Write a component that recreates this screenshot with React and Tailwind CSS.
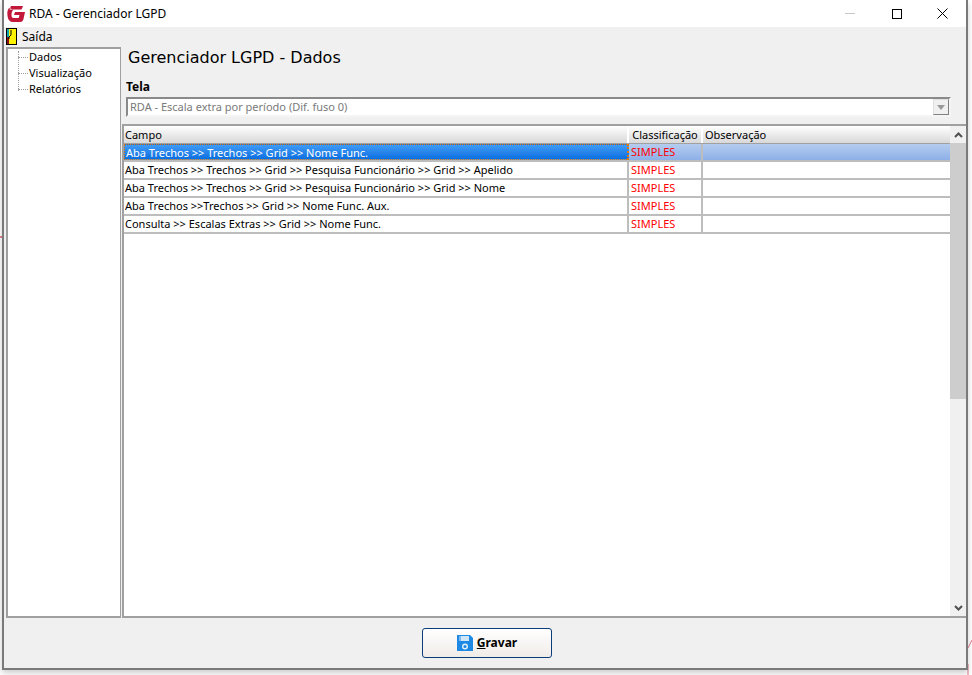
const rows = [
  'Aba Trechos >> Trechos >> Grid >> Nome Func.',
  'Aba Trechos >> Trechos >> Grid >> Pesquisa Funcionário >> Grid >> Apelido',
  'Aba Trechos >> Trechos >> Grid >> Pesquisa Funcionário >> Grid >> Nome',
  'Aba Trechos >>Trechos >> Grid >> Nome Func. Aux.',
  'Consulta >> Escalas Extras >> Grid >> Nome Func.',
];

const treeItems = ['Dados', 'Visualização', 'Relatórios'];

function AppLogo() {
  return (
    <svg width="18" height="18" viewBox="0 0 18 18">
      <path d="M4 1h12l-1.5 3.5H2.5z M2 3C0.5 5 0 7 0.5 11 1 15 3 17 6 17h7c2 0 3-1 3.5-3L18 7H8L7 10h5.5l-.8 3H6.5C5 13 4.5 12 4.5 10c0-2 .5-4 2-5.5z" fill="#c2183a" />
    </svg>
  );
}

function ExitIcon() {
  return (
    <svg width="11" height="17" viewBox="0 0 11 17">
      <rect x="0" y="0" width="11" height="17" fill="#000" />
      <rect x="1" y="1" width="2" height="8" fill="#0ea5b5" />
      <rect x="1" y="9" width="2" height="7" fill="#8b1010" />
      <rect x="3" y="1" width="7" height="15" fill="#fff200" />
      <path d="M5 2v5l-2 2v2" stroke="#000" fill="none" />
    </svg>
  );
}

function SaveIcon() {
  return (
    <svg width="16" height="16" viewBox="0 0 16 16">
      <path d="M0 0h13l3 3v13H0z" fill="#1e88e5" />
      <rect x="2" y="1" width="10" height="5" fill="#cfe5f8" />
      <rect x="2" y="1" width="2" height="5" fill="#7db9ee" />
      <circle cx="8" cy="11.5" r="2.3" fill="none" stroke="#e3f1fc" strokeWidth="1.4" />
    </svg>
  );
}

export default function App() {
  return (
    <div className="relative h-[675px] w-[972px] overflow-hidden bg-white font-['Noto_Sans',sans-serif] text-[11px] text-black">
      {/* restos da janela de tras */}
      <div className="absolute left-[80px] top-0 h-[2px] w-[10px] bg-[#a08a20]" />
      <div className="absolute left-0 top-[236px] h-[2px] w-[3px] bg-[#e08090]" />
      <svg className="absolute left-[960px] top-[630px]" width="12" height="45" viewBox="0 0 12 45">
        <path d="M12 10 L8 18 M8 34 V45" stroke="#e07a90" fill="none" />
      </svg>

      <div className="relative ml-[2px] flex h-[670px] w-[966px] flex-col border-2 border-t-0 border-[#7a7a7a] bg-[#f0f0f0] shadow-[0_3px_6px_rgba(0,0,0,0.2)]">
        <div className="flex h-[27px] shrink-0 items-center bg-white pl-[3px]">
          <AppLogo />
          <span className="ml-[4px] text-[12px]">RDA - Gerenciador LGPD</span>
          <div className="ml-auto flex items-center">
            <div className="mr-[37px] h-px w-[10px] bg-[#c8c8c8]" />
            <div className="mr-[35px] h-[10px] w-[10px] border border-black" />
            <svg className="mr-[18px]" width="11" height="11" viewBox="0 0 11 11">
              <path d="M0.5 0.5 L10.5 10.5 M10.5 0.5 L0.5 10.5" stroke="#000" fill="none" />
            </svg>
          </div>
        </div>

        <div className="flex h-[19px] shrink-0 items-center pl-[2px]">
          <ExitIcon />
          <span className="ml-[5px] text-[12px]">Saída</span>
        </div>

        <div className="flex min-h-0 flex-1 pl-[2px] pt-px">
          <div className="relative h-[571px] w-[115px] shrink-0 border-2 border-b-2 border-r border-[#a0a0a0] border-r-[#a0a0a0] bg-white pl-[21px]">
            <div className="absolute left-[10px] top-[2px] h-[40px] border-l border-dotted border-[#a0a0a0]" />
            {treeItems.map((item) => (
              <div key={item} className="relative flex h-[16px] items-center">
                <div className="absolute left-[-11px] top-[8px] w-[10px] border-t border-dotted border-[#a0a0a0]" />
                {item}
              </div>
            ))}
          </div>

          <div className="ml-px flex h-[571px] min-w-0 flex-1 flex-col">
            <h1 className="mt-[1px] h-[29px] pl-[6px] font-['DejaVu_Sans',sans-serif] text-[16px] leading-[20px]">Gerenciador LGPD - Dados</h1>
            <div className="mt-[2px] h-[16px] pl-[4px] text-[12px] font-bold leading-[16px]">Tela</div>
            <div className="ml-[4px] mt-[2px] flex h-[20px] w-[825px] items-center border-2 border-b-[#f5f5f5] border-l-[#8a8a8a] border-r-[#f5f5f5] border-t-[#8a8a8a] bg-white pl-[2px] text-[#7a7a7a]">
              RDA - Escala extra por período (Dif. fuso 0)
              <div className="ml-auto flex h-[16px] w-[16px] items-center justify-center border border-b-[#808080] border-l-[#e0e0e0] border-r-[#808080] border-t-[#e0e0e0] bg-[#f0f0f0]">
                <div className="h-0 w-0 border-x-[4px] border-t-[5px] border-x-transparent border-t-[#9a9a9a]" />
              </div>
            </div>

            <div className="mt-[7px] flex min-h-0 flex-1 border-2 border-r-0 border-[#a0a0a0] bg-white">
              <div className="min-w-0 flex-1">
                <div className="flex h-[17px] w-[828px] bg-gradient-to-b from-white to-[#d8d8d8]">
                  <div className="w-[505px] border-r-2 border-white pl-[1px] leading-[17px]">Campo</div>
                  <div className="w-[74px] border-r-2 border-white text-center leading-[17px]">Classificação</div>
                  <div className="flex-1 pl-[2px] leading-[17px]">Observação</div>
                </div>
                <div className="h-px w-[828px] bg-[#a0a0a0]" />
                <div className="w-[828px] border-r-2 border-[#a0a0a0]">
                  {rows.map((row, i) => (
                    <div key={row} className={`flex h-[18px] border-b-2 border-[#bdbdbd] leading-[16px] ${i === 0 ? 'bg-gradient-to-b from-[#b5ccee] to-[#8eb0e8]' : ''}`}>
                      <div className={`w-[505px] border-r-2 border-[#bdbdbd] pl-[1px] ${i === 0 ? 'border border-dotted border-[#e07a10] bg-gradient-to-b from-[#3f9bf5] to-[#0a6fe0] text-white' : ''}`}>{row}</div>
                      <div className="w-[74px] border-r-2 border-[#bdbdbd] pl-[2px] text-[#ff0000]">SIMPLES</div>
                      <div className="flex-1" />
                    </div>
                  ))}
                </div>
              </div>
              <div className="flex w-[16px] shrink-0 flex-col bg-[#f0f0f0]">
                <div className="flex h-[17px] items-center justify-center">
                  <svg width="9" height="6" viewBox="0 0 9 6"><path d="M1 5 L4.5 1.5 L8 5" stroke="#505050" strokeWidth="2" fill="none" /></svg>
                </div>
                <div className="h-[256px] bg-[#cdcdcd]" />
                <div className="flex-1" />
                <div className="flex h-[17px] items-center justify-center">
                  <svg width="9" height="6" viewBox="0 0 9 6"><path d="M1 1 L4.5 4.5 L8 1" stroke="#505050" strokeWidth="2" fill="none" /></svg>
                </div>
              </div>
            </div>
          </div>
        </div>

        <div className="flex h-[52px] shrink-0 items-start justify-center pl-[4px] pt-[12px]">
          <button className="flex h-[30px] w-[130px] items-center justify-center gap-[4px] rounded-[3px] border border-[#0a3d7a] bg-gradient-to-b from-white to-[#f0ece8] text-[12px] font-bold">
            <SaveIcon />
            <span><span className="underline">G</span>ravar</span>
          </button>
        </div>
      </div>
    </div>
  );
}
